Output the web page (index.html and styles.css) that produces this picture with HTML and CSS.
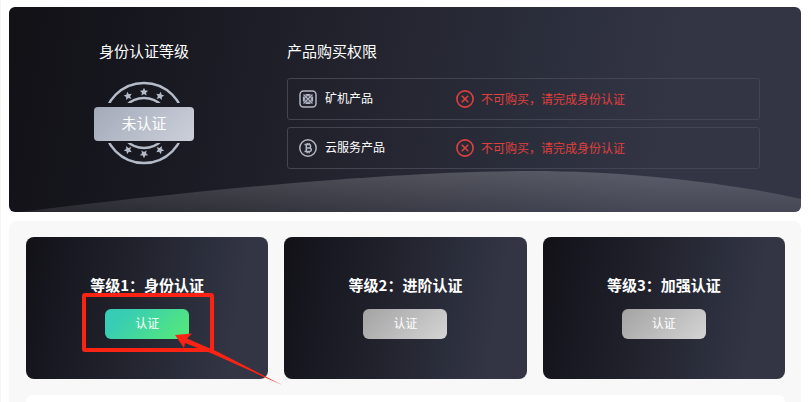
FILE: index.html
```html
<!DOCTYPE html>
<html lang="zh-CN">
<head>
    <meta charset="UTF-8">
    <title>身份认证</title>
    <link rel="stylesheet" href="styles.css">
</head>
<body>
    <svg class="defs" width="0" height="0" aria-hidden="true">
        <symbol id="icon-error" viewBox="0 0 20 20">
            <circle cx="10" cy="10" r="9" fill="none" stroke="currentColor" stroke-width="1.8"/>
            <path d="M6.4 6.4l7.2 7.2M13.6 6.4l-7.2 7.2" fill="none" stroke="currentColor" stroke-width="1.8"/>
        </symbol>
        <path id="star" d="M0-5.4L1.6-2 5.2-1.7 2.5.8 3.3 4.4 0 2.6-3.3 4.4-2.5.8-5.2-1.7-1.6-2Z"/>
    </svg>

    <section class="summary">
        <svg class="wave" viewBox="0 0 792 41" preserveAspectRatio="none" aria-hidden="true">
            <defs>
                <linearGradient id="waveFill" x1="0" y1="0" x2="0" y2="1">
                    <stop offset="0" stop-color="#fff" stop-opacity=".2"/>
                    <stop offset="1" stop-color="#fff" stop-opacity=".09"/>
                </linearGradient>
            </defs>
            <path d="M11 41C180 20 380 0 521 0 620 0 720 12 792 28V41Z" fill="url(#waveFill)"/>
        </svg>

        <div class="level">
            <h2>身份认证等级</h2>
            <div class="stamp">
                <svg width="84" height="84" viewBox="-42 -42 84 84" aria-hidden="true">
                    <defs>
                        <clipPath id="stampClip">
                            <path d="M-42-42H42V-20H-42ZM-42 20H42V42H-42Z"/>
                        </clipPath>
                    </defs>
                    <g clip-path="url(#stampClip)" fill="none" stroke="#b5bcc9" stroke-width="2.4">
                        <circle r="40"/>
                        <circle r="25"/>
                    </g>
                    <g fill="#b5bcc9">
                        <use href="#star" transform="translate(-16 -27) rotate(-12) scale(.8)"/>
                        <use href="#star" transform="translate(0 -31) scale(.8)"/>
                        <use href="#star" transform="translate(16 -27) rotate(12) scale(.8)"/>
                        <use href="#star" transform="translate(-16 27) rotate(192) scale(.8)"/>
                        <use href="#star" transform="translate(0 31) rotate(180) scale(.8)"/>
                        <use href="#star" transform="translate(16 27) rotate(168) scale(.8)"/>
                    </g>
                </svg>
                <span class="stamp-label">未认证</span>
            </div>
        </div>

        <div class="rights">
            <h2>产品购买权限</h2>
            <div class="right-row">
                <svg class="icon" viewBox="0 0 18 18" fill="none" stroke="currentColor" aria-hidden="true">
                    <rect x="1" y="1" width="16" height="16" rx="3.5" stroke-width="1.5"/>
                    <path d="M4.5 4.5l9 9M13.5 4.5l-9 9" stroke-width="1.3"/>
                    <circle cx="9" cy="9" r="3.4" stroke-width="1.2"/>
                    <path d="M6.5 4.5h5M6.5 13.5h5M4.5 6.5v5M13.5 6.5v5" stroke-width="1.2"/>
                </svg>
                <span class="product">矿机产品</span>
                <span class="denied"><svg class="icon"><use href="#icon-error"/></svg><span class="denied-text">不可购买，请完成身份认证</span></span>
            </div>
            <div class="right-row">
                <svg class="icon" viewBox="0 0 18 18" fill="none" stroke="currentColor" aria-hidden="true">
                    <circle cx="9" cy="9" r="8.2" stroke-width="1.5"/>
                    <path d="M5.5 5.6H10a1.7 1.7 0 0 1 0 3.4H7.3M7.3 9h3.2a1.8 1.8 0 0 1 0 3.6H5.5M7.3 5.6v7M8.2 4v1.6M10.2 4v1.6M8.2 12.6v1.6M10.2 12.6v1.6" stroke-width="1.5"/>
                </svg>
                <span class="product">云服务产品</span>
                <span class="denied"><svg class="icon"><use href="#icon-error"/></svg><span class="denied-text">不可购买，请完成身份认证</span></span>
            </div>
        </div>
    </section>

    <section class="levels">
        <div class="cards">
            <div class="card">
                <h3>等级1：身份认证</h3>
                <div class="action">
                    <button class="btn btn-active" type="button">认证</button>
                    <div class="mark">
                        <svg class="arrow" viewBox="0 0 108 52" width="108" height="52" aria-hidden="true">
                            <path d="M0 2L17 .5 12 5.5 42 18.5 107 52 38 21 10 10 9 15Z" fill="#fb2414"/>
                        </svg>
                    </div>
                </div>
            </div>
            <div class="card">
                <h3>等级2：进阶认证</h3>
                <div class="action">
                    <button class="btn" type="button">认证</button>
                </div>
            </div>
            <div class="card">
                <h3>等级3：加强认证</h3>
                <div class="action">
                    <button class="btn" type="button">认证</button>
                </div>
            </div>
        </div>
        <div class="detail"></div>
    </section>
</body>
</html>
```
FILE: styles.css
```css
* {
    box-sizing: border-box;
}

html {
    height: 100%;
    overflow: hidden;
}

body {
    display: flex;
    flex-direction: column;
    gap: 9px;
    height: 100%;
    margin: 0;
    padding: 7px 10px 0 8px;
    border-left: 1px solid #f5f5f5;
    background: #fff;
    color: #fff;
    font-family: "Noto Sans CJK SC", sans-serif;
    font-size: 12px;
}

h2, h3 {
    margin: 0;
    font-size: 15px;
    line-height: 22px;
}

h2 {
    font-weight: 400;
}

.defs {
    position: absolute;
}

.icon {
    flex: none;
    width: 18px;
    height: 18px;
}

.summary {
    position: relative;
    display: flex;
    padding: 33px 41px 43px 0;
    border-radius: 6px;
    background: linear-gradient(100deg, #121116 0%, #16161e 14%, #20202a 36%, #2a2d3a 64%, #333545 82%);
    overflow: hidden;
}

.wave {
    position: absolute;
    left: 0;
    bottom: 0;
    width: 100%;
    height: 41px;
}

.level {
    display: flex;
    flex-direction: column;
    align-items: center;
    gap: 19px;
    width: 270px;
    margin-right: 8px;
}

.stamp {
    display: grid;
    place-items: center;
}

.stamp > * {
    grid-area: 1 / 1;
}

.stamp-label {
    width: 100px;
    margin-top: 2px;
    padding-bottom: 2px;
    border-radius: 4px;
    background: linear-gradient(135deg, #a3aab9, #ccd0da);
    font-size: 15px;
    line-height: 32px;
    text-align: center;
}

.rights {
    position: relative;
    display: flex;
    flex: 1;
    flex-direction: column;
    gap: 7px;
}

.rights h2 {
    margin-bottom: 9px;
}

.right-row {
    display: grid;
    grid-template-columns: 18px 123px 1fr;
    align-items: center;
    column-gap: 8px;
    height: 42px;
    padding: 0 11px;
    border: 1px solid #434552;
    border-radius: 3px;
    color: #b0b6c4;
}

.product {
    padding-bottom: 4px;
    color: #fff;
}

.denied {
    display: flex;
    align-items: center;
    gap: 7px;
    color: #e0403d;
}

.denied-text {
    padding-bottom: 2px;
}

.levels {
    display: flex;
    flex: 1;
    flex-direction: column;
    gap: 16px;
    padding: 16px 16px 0 17px;
    border-radius: 8px 8px 0 0;
    background: #f8f8f8;
}

.cards {
    display: grid;
    grid-template-columns: repeat(3, 1fr);
    gap: 16px;
}

.card {
    display: flex;
    flex-direction: column;
    align-items: center;
    gap: 13px;
    padding: 37px 0 40px;
    border-radius: 8px;
    background: linear-gradient(100deg, #121116 0%, #171720 14%, #20202a 38%, #2a2d3a 66%, #333545 85%);
}

.action {
    position: relative;
}

.btn {
    display: block;
    width: 84px;
    height: 30px;
    padding: 0 0 4px;
    border: 0;
    border-radius: 6px;
    background: linear-gradient(135deg, #a3a3a3, #d4d4d4);
    color: #fff;
    font: inherit;
}

.btn-active {
    background: linear-gradient(135deg, #37cdb5 20%, #53e67e 90%);
}

/* highlight around the first button */
.mark {
    position: absolute;
    inset: -16px -25px -13px -23px;
    border: 4px solid #fb2414;
    border-radius: 3px;
    pointer-events: none;
}

.arrow {
    position: absolute;
    top: 36px;
    left: 89px;
}

.detail {
    flex: 1;
    border-radius: 8px 8px 0 0;
    background: #fff;
}
```
